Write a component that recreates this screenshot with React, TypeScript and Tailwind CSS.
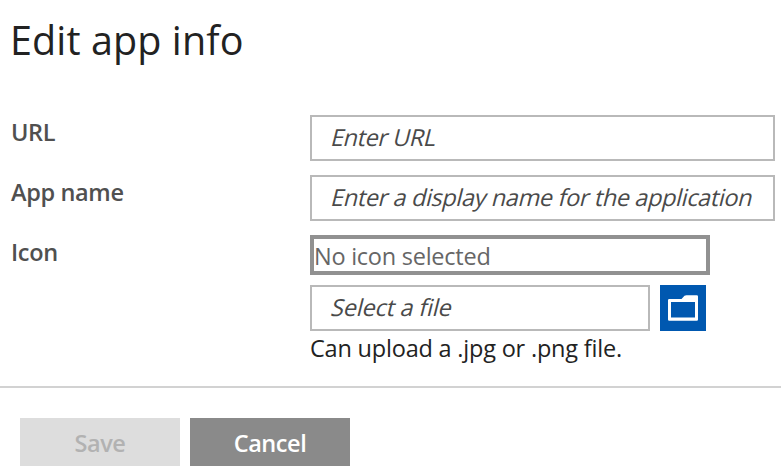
import type { ReactNode } from "react";

function Field({ label, children }: { label: ReactNode; children: ReactNode }) {
  return (
    <div className="flex">
      <div className="w-[300px] shrink-0 pl-px font-semibold leading-[34px] tracking-[-0.35px] text-[#505050]">{label}</div>
      {children}
    </div>
  );
}

function Box({ width, children }: { width: string; children: ReactNode }) {
  return (
    <div className={`${width} h-[46px] shrink-0 border-2 border-[#b9b9b9] pl-5 leading-10 whitespace-nowrap text-[#4a4a4a]`}>
      {children}
    </div>
  );
}

function FolderIcon() {
  return (
    <svg width="30" height="26" viewBox="0 0 30 26" className="block">
      <path
        fill="#fff"
        fillRule="evenodd"
        d="M1.2 4H13.5L16.5 .8Q17.2 .2 18.5 .2H28.8Q30 .2 30 1.4V24.5Q30 25.7 28.8 25.7H1.2Q0 25.7 0 24.5V5.2Q0 4 1.2 4ZM3 7V22.4H27V7Z"
      />
    </svg>
  );
}

export default function App() {
  return (
    <div className="h-[469px] w-[781px] overflow-hidden bg-white font-['Open_Sans',sans-serif] text-[23.5px] text-[#222]">
      <h1 className="ml-2.5 pt-2.5 text-[39.5px] leading-[60px]"><span className="inline-block tracking-[0.1px]">Edit app info</span></h1>
      <div className="ml-2.5 mt-[45px] flex flex-col gap-3.5">
        <Field label={<span>URL</span>}>
          <Box width="w-[465px]"><span className="inline-block -skew-x-[14deg] tracking-[-0.45px]">Enter URL</span></Box>
        </Field>
        <Field label={<span>App name</span>}>
          <Box width="w-[465px]"><span className="inline-block -skew-x-[14deg] tracking-[-0.37px]">Enter a display name for the application</span></Box>
        </Field>
        <Field label={<span>Icon</span>}>
          <div>
            <div className="h-10 w-[400px] border-4 border-[#919191] leading-[35px] text-[#666]"><span className="tracking-[-0.25px]">No icon selected</span></div>
            <div className="mt-2.5 flex gap-2.5">
              <Box width="w-[340px]"><span className="inline-block -skew-x-[14deg] tracking-[-0.2px]">Select a file</span></Box>
              <button className="flex h-[46px] w-[46px] items-center justify-center bg-[#0058b0]" aria-label="Browse">
                <FolderIcon />
              </button>
            </div>
            <div className="leading-[35px]"><span className="tracking-[-0.2px]">Can upload a .jpg or .png file.</span></div>
          </div>
        </Field>
      </div>
      <div className="mt-5 h-0.5 bg-[#d2d2d2]" />
      <div className="ml-5 mt-[30px] flex gap-2.5 font-semibold leading-[50px] tracking-[-0.45px]">
        <button className="h-12 w-40 bg-[#ddd] text-[#b2b2b2]">Save</button>
        <button className="h-12 w-40 bg-[#8a8a8a] text-white">Cancel</button>
      </div>
    </div>
  );
}
